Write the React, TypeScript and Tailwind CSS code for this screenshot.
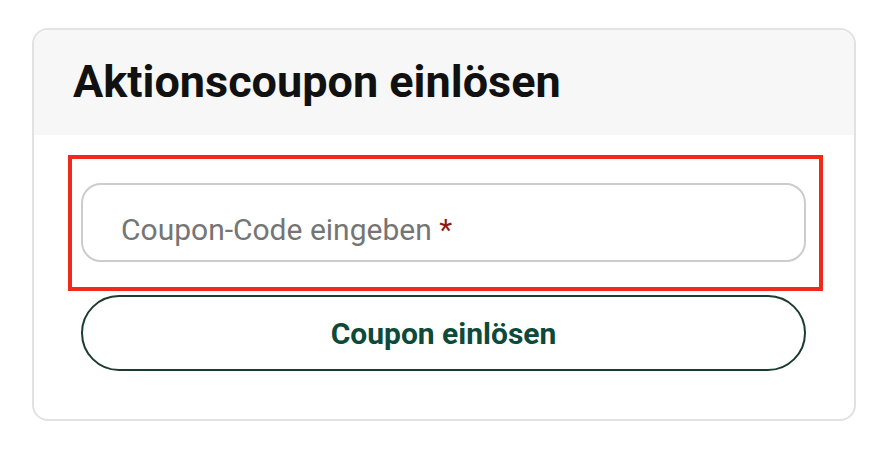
export default function App() {
  return (
    <div className="w-[882px] h-[450px] bg-white" style={{ fontFamily: 'Roboto, "Noto Sans", sans-serif' }}>
      <div className="pt-[28px] pl-[32px]">
        <div className="w-[824px] h-[393px] border-2 border-[#e2e2e2] rounded-[16px] overflow-hidden bg-white">
          <div className="h-[105px] bg-[#f7f7f7] pl-[39px] pt-[25px]">
            <h2 className="text-[45px] leading-[54px] font-bold text-[#111]">Aktionscoupon einlösen</h2>
          </div>
          <div className="pt-[20px]">
            <div className="ml-[34px] w-[755px] border-4 border-[#f0281e] pl-[9px] pr-[13px] pt-[24px] pb-[25px]">
              <div className="h-[79px] border-2 border-[#cccccc] rounded-[20px] flex items-center pl-[38px] pt-[13px] bg-white">
                <span className="text-[30px] text-[#757575]">Coupon-Code eingeben <span className="text-[#8b1a12]">*</span></span>
              </div>
            </div>
            <button className="ml-[47px] mt-[4px] w-[725px] h-[76px] border-2 border-[#1d3b33] rounded-full flex items-center justify-center text-[30px] font-bold text-[#0d4a3a] bg-white">
              Coupon einlösen
            </button>
          </div>
        </div>
      </div>
    </div>
  );
}
